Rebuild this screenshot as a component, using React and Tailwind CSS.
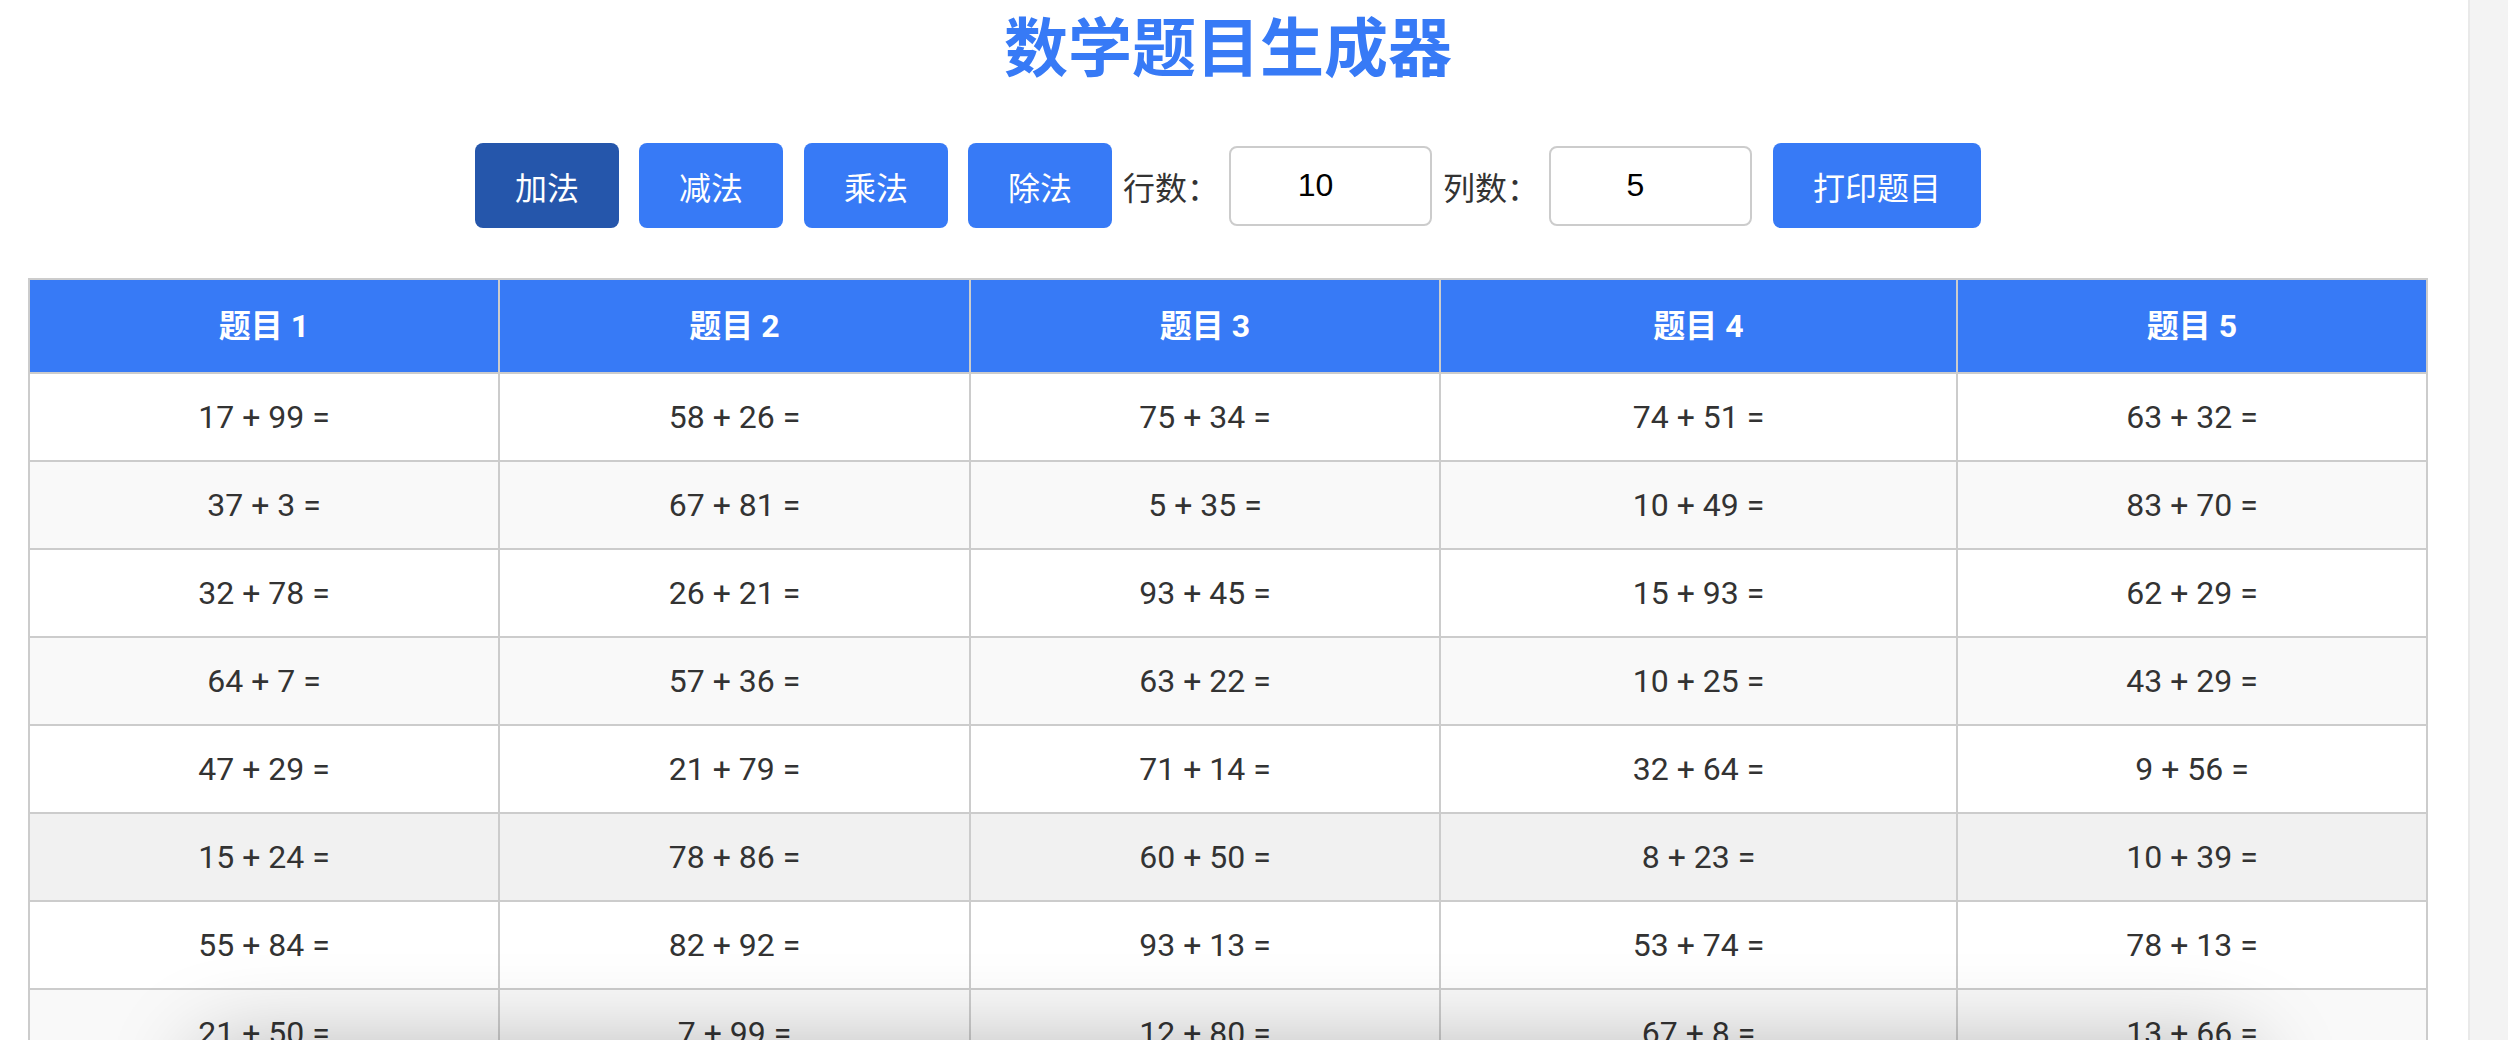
import React from "react";

const rows = [
  ["17 + 99 =", "58 + 26 =", "75 + 34 =", "74 + 51 =", "63 + 32 ="],
  ["37 + 3 =", "67 + 81 =", "5 + 35 =", "10 + 49 =", "83 + 70 ="],
  ["32 + 78 =", "26 + 21 =", "93 + 45 =", "15 + 93 =", "62 + 29 ="],
  ["64 + 7 =", "57 + 36 =", "63 + 22 =", "10 + 25 =", "43 + 29 ="],
  ["47 + 29 =", "21 + 79 =", "71 + 14 =", "32 + 64 =", "9 + 56 ="],
  ["15 + 24 =", "78 + 86 =", "60 + 50 =", "8 + 23 =", "10 + 39 ="],
  ["55 + 84 =", "82 + 92 =", "93 + 13 =", "53 + 74 =", "78 + 13 ="],
  ["21 + 50 =", "7 + 99 =", "12 + 80 =", "67 + 8 =", "13 + 66 ="],
  ["44 + 18 =", "36 + 57 =", "81 + 9 =", "29 + 62 =", "50 + 41 ="],
  ["6 + 73 =", "88 + 12 =", "19 + 47 =", "70 + 35 =", "24 + 90 ="],
];

const cjk = "font-['Noto_Sans_CJK_SC',sans-serif]";
const cellFont = "font-['Roboto','Noto_Sans_CJK_SC',sans-serif]";

function Btn({ children, active, className = "" }) {
  return (
    <button
      className={`h-[85px] px-[40px] rounded-[8px] text-[32px] leading-none text-white ${cjk} ${
        active ? "bg-[#2556ab]" : "bg-[#377af6]"
      } ${className}`}
    >
      {children}
    </button>
  );
}

export default function App() {
  return (
    <div className="w-[2508px] h-[1040px] overflow-hidden flex bg-white relative">
      <div className="w-[2468px] h-[1040px] pl-[28px] pr-[40px] relative">
        <h1
          className={`mt-[3px] text-center text-[64px] leading-[80px] font-bold text-[#377af6] ${cjk}`}
        >
          数学题目生成器
        </h1>

        <div className="mt-[60px] flex justify-center items-center">
          <Btn active>加法</Btn>
          <Btn className="ml-[20px]">减法</Btn>
          <Btn className="ml-[21px]">乘法</Btn>
          <Btn className="ml-[20px]">除法</Btn>
          <span className={`ml-[11px] w-[96px] text-[32px] text-[#333] ${cjk}`}>行数：</span>
          <input
            readOnly
            value="10"
            className="ml-[10px] w-[203px] h-[80px] border-2 border-[#cccccc] rounded-[8px] text-center pl-[8px] pr-[38px] text-[32px] text-black font-['Liberation_Sans',Arial,sans-serif] outline-none"
          />
          <span className={`ml-[11px] w-[96px] text-[32px] text-[#333] ${cjk}`}>列数：</span>
          <input
            readOnly
            value="5"
            className="ml-[10px] w-[203px] h-[80px] border-2 border-[#cccccc] rounded-[8px] text-center pl-[8px] pr-[38px] text-[32px] text-black font-['Liberation_Sans',Arial,sans-serif] outline-none"
          />
          <Btn className="ml-[21px]">打印题目</Btn>
        </div>

        <div className="mt-[50px] w-[2400px] border-l-2 border-t-2 border-[#cccccc] grid grid-cols-[470px_471px_470px_517px_470px]">
          {[1, 2, 3, 4, 5].map((n) => (
            <div
              key={n}
              className={`h-[94px] bg-[#377af6] border-r-2 border-b-2 border-[#cccccc] flex items-center justify-center text-white text-[32px] font-bold ${cellFont}`}
            >
              题目 {n}
            </div>
          ))}
          {rows.map((r, i) =>
            r.map((c, j) => (
              <div
                key={`${i}-${j}`}
                className={`h-[88px] border-r-2 border-b-2 border-[#cccccc] flex items-center justify-center text-[32px] text-[#333] ${cellFont} ${
                  i === 5 ? "bg-[#f1f1f1]" : i % 2 === 1 ? "bg-[#f9f9f9]" : "bg-white"
                }`}
              >
                {c}
              </div>
            ))
          )}
        </div>

        <div className="absolute left-[200px] w-[2050px] top-[1048px] h-[120px] bg-white shadow-[0_0_90px_rgba(0,0,0,0.28)] rounded-[20px]" />
      </div>
      <div className="w-[40px] h-[1040px] bg-[#f3f3f3] border-l-2 border-[#e9e9e9]" />
    </div>
  );
}
